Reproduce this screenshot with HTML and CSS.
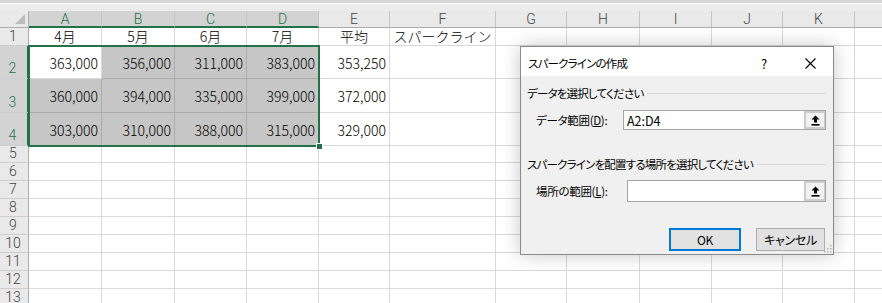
FILE: index.html
```html
<!DOCTYPE html>
<html lang="ja">
<head>
    <meta charset="UTF-8">
    <meta name="viewport" content="width=device-width, initial-scale=1.0">
    <title>スパークラインの作成</title>
    <link rel="stylesheet" href="styles.css">
</head>
<body>
    <div class="topbar"></div>
    <div class="sheetwrap">
        <div class="sheet">
            <div class="h corner"><span class="tri"></span></div>
            <div class="h on">A</div><div class="h on">B</div><div class="h on">C</div><div class="h on">D</div>
            <div class="h">E</div><div class="h">F</div><div class="h">G</div><div class="h">H</div>
            <div class="h">I</div><div class="h">J</div><div class="h">K</div><div class="h"></div>

            <div class="rh">1</div>
            <div class="c t">4月</div><div class="c t">5月</div><div class="c t">6月</div><div class="c t">7月</div>
            <div class="c t">平均</div><div class="c t">スパークライン</div>
            <div class="c"></div><div class="c"></div><div class="c"></div><div class="c"></div><div class="c"></div><div class="c"></div>

            <div class="rh on">2</div>
            <div class="c n">363,000</div><div class="c n s">356,000</div><div class="c n s">311,000</div><div class="c n s">383,000</div>
            <div class="c n">353,250</div>
            <div class="c"></div><div class="c"></div><div class="c"></div><div class="c"></div><div class="c"></div><div class="c"></div><div class="c"></div>

            <div class="rh on">3</div>
            <div class="c n s">360,000</div><div class="c n s">394,000</div><div class="c n s">335,000</div><div class="c n s">399,000</div>
            <div class="c n">372,000</div>
            <div class="c"></div><div class="c"></div><div class="c"></div><div class="c"></div><div class="c"></div><div class="c"></div><div class="c"></div>

            <div class="rh on">4</div>
            <div class="c n s">303,000</div><div class="c n s">310,000</div><div class="c n s">388,000</div><div class="c n s">315,000</div>
            <div class="c n">329,000</div>
            <div class="c"></div><div class="c"></div><div class="c"></div><div class="c"></div><div class="c"></div><div class="c"></div><div class="c"></div>

            <div class="rh">5</div><div class="c"></div><div class="c"></div><div class="c"></div><div class="c"></div><div class="c"></div><div class="c"></div><div class="c"></div><div class="c"></div><div class="c"></div><div class="c"></div><div class="c"></div><div class="c"></div>
            <div class="rh">6</div><div class="c"></div><div class="c"></div><div class="c"></div><div class="c"></div><div class="c"></div><div class="c"></div><div class="c"></div><div class="c"></div><div class="c"></div><div class="c"></div><div class="c"></div><div class="c"></div>
            <div class="rh">7</div><div class="c"></div><div class="c"></div><div class="c"></div><div class="c"></div><div class="c"></div><div class="c"></div><div class="c"></div><div class="c"></div><div class="c"></div><div class="c"></div><div class="c"></div><div class="c"></div>
            <div class="rh">8</div><div class="c"></div><div class="c"></div><div class="c"></div><div class="c"></div><div class="c"></div><div class="c"></div><div class="c"></div><div class="c"></div><div class="c"></div><div class="c"></div><div class="c"></div><div class="c"></div>
            <div class="rh">9</div><div class="c"></div><div class="c"></div><div class="c"></div><div class="c"></div><div class="c"></div><div class="c"></div><div class="c"></div><div class="c"></div><div class="c"></div><div class="c"></div><div class="c"></div><div class="c"></div>
            <div class="rh">10</div><div class="c"></div><div class="c"></div><div class="c"></div><div class="c"></div><div class="c"></div><div class="c"></div><div class="c"></div><div class="c"></div><div class="c"></div><div class="c"></div><div class="c"></div><div class="c"></div>
            <div class="rh">11</div><div class="c"></div><div class="c"></div><div class="c"></div><div class="c"></div><div class="c"></div><div class="c"></div><div class="c"></div><div class="c"></div><div class="c"></div><div class="c"></div><div class="c"></div><div class="c"></div>
            <div class="rh">12</div><div class="c"></div><div class="c"></div><div class="c"></div><div class="c"></div><div class="c"></div><div class="c"></div><div class="c"></div><div class="c"></div><div class="c"></div><div class="c"></div><div class="c"></div><div class="c"></div>
            <div class="rh">13</div><div class="c"></div><div class="c"></div><div class="c"></div><div class="c"></div><div class="c"></div><div class="c"></div><div class="c"></div><div class="c"></div><div class="c"></div><div class="c"></div><div class="c"></div><div class="c"></div>
        </div>
        <div class="sheet overlay">
            <div class="selection"><span class="handle"></span></div>
        </div>
    </div>

    <div class="dialog">
        <div class="titlebar">
            <span class="title">スパークラインの作成</span>
            <span class="tbtn">?</span>
            <span class="tbtn">
                <svg width="11" height="11" viewBox="0 0 11 11"><path d="M0.5 0.5 L10.5 10.5 M10.5 0.5 L0.5 10.5" stroke="#000" stroke-width="1.1" fill="none"/></svg>
            </span>
        </div>
        <div class="dbody">
            <div class="group">データを選択してください</div>
            <div class="field">
                <span class="label">データ範囲(<u>D</u>):</span>
                <div class="refbox wide">
                    <span class="val">A2:D4</span>
                    <span class="refbtn">
                        <svg width="9" height="11" viewBox="0 0 9 11"><path d="M4.5 0.5 L8.5 4.5 H6 V7.5 H3 V4.5 H0.5 Z" fill="#000"/><rect x="0.5" y="9" width="8" height="1.6" fill="#000"/></svg>
                    </span>
                </div>
            </div>
            <div class="group second">スパークラインを配置する場所を選択してください</div>
            <div class="field tall">
                <span class="label">場所の範囲(<u>L</u>):</span>
                <div class="refbox">
                    <span class="val"></span>
                    <span class="refbtn">
                        <svg width="9" height="11" viewBox="0 0 9 11"><path d="M4.5 0.5 L8.5 4.5 H6 V7.5 H3 V4.5 H0.5 Z" fill="#000"/><rect x="0.5" y="9" width="8" height="1.6" fill="#000"/></svg>
                    </span>
                </div>
            </div>
            <div class="buttons">
                <button class="btn ok">OK</button>
                <button class="btn cancel">キャンセル</button>
            </div>
        </div>
        <svg class="grip" width="9" height="9" viewBox="0 0 9 9">
            <rect x="7" y="1" width="1.5" height="1.5" fill="#b4b4b4"/>
            <rect x="4" y="4" width="1.5" height="1.5" fill="#b4b4b4"/>
            <rect x="7" y="4" width="1.5" height="1.5" fill="#b4b4b4"/>
            <rect x="1" y="7" width="1.5" height="1.5" fill="#b4b4b4"/>
            <rect x="4" y="7" width="1.5" height="1.5" fill="#b4b4b4"/>
            <rect x="7" y="7" width="1.5" height="1.5" fill="#b4b4b4"/>
        </svg>
    </div>
</body>
</html>
```

FILE: styles.css
```css
body {
    margin: 0;
    overflow: hidden;
    background-color: white;
    font-family: "Noto Sans CJK JP", "Noto Sans", sans-serif;
    position: relative;
    width: 882px;
    height: 303px;
}
.topbar {
    height: 11px;
    box-sizing: border-box;
    border-top: 3px solid #d6d6d6;
    background: linear-gradient(#fbfbfb 1px, #ececec 1px);
}
.sheetwrap {
    display: grid;
}
.sheet {
    grid-area: 1 / 1;
    display: grid;
    grid-template-columns: 29px 73px 73px 72px 72px 71px 106px 71px 73px 72px 71px 72px 72px;
    grid-template-rows: 17px 18px 33px 34px 33px 17px repeat(8, 18px);
    font-size: 14px;
    font-weight: 300;
    color: #000;
}
.overlay {
    pointer-events: none;
}
.h {
    background-color: #e9e9e9;
    border-right: 1px solid #c3c3c3;
    border-bottom: 1px solid #ababab;
    box-sizing: border-box;
    color: #444;
    text-align: center;
    font-family: Roboto, "Noto Sans", sans-serif;
    font-weight: 300;
    line-height: 16px;
    font-size: 14px;
}
.h.on {
    background-color: #d3d3d3;
    color: #217346;
    border-bottom: 2px solid #217346;
}
.corner {
    position: relative;
    border-right-color: #ababab;
}
.tri {
    position: absolute;
    right: 3px;
    bottom: 3px;
    width: 0;
    height: 0;
    border-left: 10px solid transparent;
    border-bottom: 10px solid #bcbcbc;
}
.rh {
    background-color: #e9e9e9;
    border-right: 1px solid #ababab;
    border-bottom: 1px solid #cdcdcd;
    box-sizing: border-box;
    color: #444;
    font-family: Roboto, "Noto Sans", sans-serif;
    font-weight: 300;
    display: flex;
    align-items: flex-end;
    justify-content: center;
    line-height: 17px;
    padding-right: 2px;
}
.rh.on {
    background-color: #d3d3d3;
    color: #217346;
    border-right: 2px solid #217346;
    padding-bottom: 1px;
}
.c {
    border-right: 1px solid #d9d9d9;
    border-bottom: 1px solid #d9d9d9;
    box-sizing: border-box;
    display: flex;
    align-items: center;
    line-height: 17px;
    white-space: nowrap;
}
.c.t {
    justify-content: center;
}
.c.n {
    justify-content: flex-end;
    padding-right: 3px;
    padding-top: 2px;
}
.c.s {
    background-color: #c6c6c6;
    border-color: #acacac;
}
.selection {
    grid-column: 2 / 6;
    grid-row: 3 / 6;
    margin: -1px;
    border: 2px solid #217346;
    position: relative;
}
.handle {
    position: absolute;
    right: -5px;
    bottom: -5px;
    width: 5px;
    height: 5px;
    background-color: #217346;
    border: 1px solid #fff;
}

/* dialog */
.dialog {
    position: absolute;
    left: 520px;
    top: 46px;
    width: 314px;
    height: 209px;
    box-sizing: border-box;
    border: 1px solid #8a8a8a;
    background-color: #f0f0f0;
    box-shadow: 0 0 18px rgba(0, 0, 0, 0.22);
    font-size: 11.5px;
    letter-spacing: -0.8px;
    font-feature-settings: "palt";
    color: #000;
}
.titlebar {
    height: 29px;
    box-sizing: border-box;
    padding-top: 3px;
    padding-left: 7px;
    background-color: #fff;
    display: flex;
    align-items: center;
}
.title {
    flex: 1;
}
.tbtn {
    width: 46px;
    text-align: center;
    display: flex;
    justify-content: center;
    font-size: 13px;
    letter-spacing: 0;
}
.dbody {
    padding: 9px 7px 0 6px;
}
.group {
    height: 16px;
    line-height: 16px;
    display: flex;
    align-items: center;
}
.group::after {
    content: "";
    flex: 1;
    border-top: 1px solid #d7d7d7;
    margin-left: 4px;
}
.group.second {
    margin-top: 26px;
}
.field {
    margin-top: 9px;
    height: 20px;
    display: flex;
    align-items: center;
    padding-left: 9px;
}
.field.tall {
    margin-top: 8px;
    height: 22px;
}
.label {
    flex: 1;
    letter-spacing: -0.3px;
}
.refbox {
    width: 199px;
    height: 100%;
    box-sizing: border-box;
    border: 1px solid #a5a5a5;
    background-color: #fff;
    display: flex;
    align-items: stretch;
}
.refbox.wide {
    width: 203px;
}
.val {
    flex: 1;
    padding-left: 3px;
    display: flex;
    align-items: center;
    font-size: 12.5px;
    letter-spacing: 0;
}
.refbtn {
    width: 21px;
    box-sizing: border-box;
    border: 2px solid #cdcdcd;
    border-right-width: 1px;
    background-color: #f2f2f2;
    display: flex;
    align-items: center;
    justify-content: center;
}
.buttons {
    margin-top: 26px;
    display: flex;
    justify-content: flex-end;
    gap: 15px;
    padding-right: 1px;
}
.btn {
    height: 23px;
    box-sizing: border-box;
    background-color: #e1e1e1;
    border: 1px solid #adadad;
    font-family: inherit;
    font-size: 12px;
    letter-spacing: -0.3px;
    font-feature-settings: "palt";
    color: #000;
    padding: 0;
}
.btn.ok {
    width: 72px;
    border: 2px solid #0078d7;
}
.btn.cancel {
    width: 69px;
}
.grip {
    position: absolute;
    right: 1px;
    bottom: 1px;
}
```
